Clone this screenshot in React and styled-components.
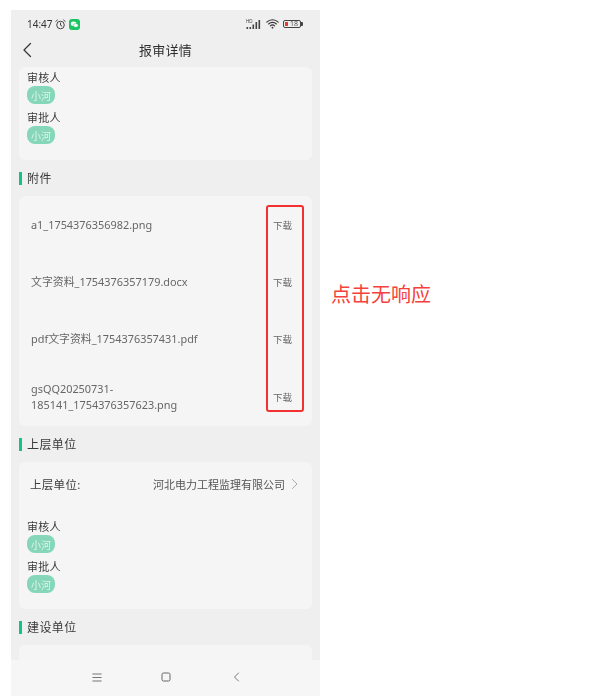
import React from "react";
import styled, { createGlobalStyle } from "styled-components";

const GlobalStyle = createGlobalStyle`
  html, body {
    margin: 0;
    padding: 0;
    background: #ffffff;
  }
  body {
    font-family: "Noto Sans", "Noto Sans CJK SC", sans-serif;
  }
`;

const Page = styled.div`
  display: flex;
  align-items: flex-start;
  width: 595px;
  height: 696px;
  overflow: hidden;
  padding: 10px 0 0 11px;
  box-sizing: border-box;
`;

const Phone = styled.div`
  position: relative;
  display: flex;
  flex-direction: column;
  width: 309px;
  height: 686px;
  flex: none;
  background: #efefef;
  overflow: hidden;
`;

const Screen = styled.div`
  display: flex;
  flex-direction: column;
  flex: 1;
  min-height: 0;
  filter: blur(0.35px);
`;

const StatusBar = styled.div`
  display: flex;
  align-items: center;
  justify-content: space-between;
  height: 28px;
  padding: 0 19px 0 16px;
  flex: none;
`;

const StatusGroup = styled.div`
  display: flex;
  align-items: center;
  gap: ${(p) => p.$gap || 3}px;
`;

const Clock = styled.span`
  font-size: 10px;
  color: #333333;
  margin-right: -1px;
`;

const Battery = styled.div`
  position: relative;
  display: flex;
  align-items: center;
  justify-content: flex-end;
  width: 18px;
  height: 8px;
  box-sizing: border-box;
  border: 1px solid #444444;
  border-radius: 2px;
  padding-right: 2px;
  font-size: 7px;
  line-height: 6px;
  color: #555555;
  &::before {
    content: "";
    position: absolute;
    left: 1px;
    top: 1px;
    width: 3px;
    height: 4px;
    background: #e53935;
  }
  &::after {
    content: "";
    position: absolute;
    right: -3px;
    top: 1px;
    width: 2px;
    height: 4px;
    background: #444444;
    border-radius: 0 1px 1px 0;
  }
`;

const NavBar = styled.div`
  position: relative;
  display: flex;
  align-items: center;
  justify-content: center;
  height: 29px;
  box-sizing: border-box;
  padding-bottom: 6px;
  flex: none;
  font-size: 13px;
  color: #2f2f2f;
  letter-spacing: 0.3px;
`;

const BackButton = styled.div`
  position: absolute;
  left: 10px;
  top: 3px;
  display: flex;
`;

const Content = styled.div`
  display: flex;
  flex-direction: column;
  flex: 1;
  min-height: 0;
  overflow: hidden;
  padding: 0 8px;
`;

const Card = styled.div`
  background: #f5f5f5;
  border-radius: 6px;
  flex: none;
  box-sizing: border-box;
  height: ${(p) => p.$height}px;
  padding: ${(p) => p.$pad || "0"};
`;

const SectionTitle = styled.div`
  display: flex;
  align-items: center;
  flex: none;
  gap: 5px;
  height: 36px;
  font-size: 12px;
  color: #3a3a3a;
  letter-spacing: 0.4px;
  &::before {
    content: "";
    width: 3px;
    height: 13px;
    background: #0fc584;
  }
`;

const PersonBlock = styled.div`
  display: flex;
  flex-direction: column;
  align-items: flex-start;
  padding-left: 8px;
  margin-bottom: 4px;
`;

const PersonLabel = styled.div`
  font-size: 11px;
  line-height: 20px;
  height: 18px;
  color: #3a3a3a;
  letter-spacing: 0.2px;
`;

const Pill = styled.div`
  display: flex;
  align-items: center;
  justify-content: center;
  width: 28px;
  height: 18px;
  border-radius: 8px;
  background: #86d6ba;
  color: #dff4ec;
  font-size: 10px;
`;

const FileRow = styled.div`
  display: flex;
  align-items: center;
  justify-content: space-between;
  height: 57.3px;
  padding: 0 20px 0 12px;
`;

const FileName = styled.div`
  width: 180px;
  font-size: 10.9px;
  line-height: 16px;
  color: #666666;
  overflow-wrap: anywhere;
`;

const DownloadLink = styled.div`
  font-size: 9.5px;
  color: #666666;
`;

const UnitRow = styled.div`
  display: flex;
  align-items: center;
  justify-content: space-between;
  height: 44px;
  padding: 0 13px 0 11px;
  margin-bottom: 11px;
`;

const UnitLabel = styled.div`
  font-size: 11.5px;
  color: #3a3a3a;
  letter-spacing: 0.3px;
`;

const UnitValue = styled.div`
  display: flex;
  align-items: center;
  gap: 6px;
  font-size: 11px;
  color: #555555;
`;

const BottomBar = styled.div`
  display: grid;
  grid-template-columns: 69px 72px 7px;
  align-items: center;
  height: 36px;
  box-sizing: border-box;
  padding: 0 0 2px 81px;
  flex: none;
  background: #f6f6f6;
`;

const RedBox = styled.div`
  position: absolute;
  left: 255px;
  top: 195px;
  width: 38px;
  height: 207px;
  box-sizing: border-box;
  border: 2px solid #f23030;
  border-radius: 3px;
`;

const Annotation = styled.div`
  margin: 271px 0 0 11px;
  font-size: 20px;
  line-height: 28px;
  color: #f5413c;
  white-space: nowrap;
`;

const Line = ({ d, w = 1, c = "#555" }) => (
  <path d={d} fill="none" stroke={c} strokeWidth={w} strokeLinecap="round" strokeLinejoin="round" />
);

const AlarmIcon = () => (
  <svg width="11" height="11" viewBox="0 0 11 11">
    <circle cx="5.5" cy="6" r="3.8" fill="none" stroke="#444" strokeWidth="1" />
    <Line d="M5.5 4v2.2l1.3.8M.8 2.4 2.4 1M10.2 2.4 8.6 1" c="#444" />
  </svg>
);

const WechatIcon = () => (
  <svg width="11" height="11" viewBox="0 0 11 11">
    <rect width="11" height="11" rx="3" fill="#19c463" />
    <ellipse cx="4.6" cy="4.8" rx="2.8" ry="2.2" fill="#fff" />
    <ellipse cx="6.8" cy="6.4" rx="2.4" ry="1.9" fill="#fff" stroke="#19c463" strokeWidth="0.5" />
  </svg>
);

const SignalIcon = () => (
  <svg width="16" height="11" viewBox="0 0 16 11">
    <text x="0" y="4" fontSize="4.5" fill="#444" fontFamily="Liberation Sans">HD</text>
    <g fill="#444">
      <rect x="0.5" y="8" width="1.6" height="2" />
      <rect x="3.5" y="8" width="1.6" height="2" />
      <rect x="6.5" y="5.5" width="1.6" height="4.5" />
      <rect x="9.5" y="3" width="1.6" height="7" />
      <rect x="12.5" y="1" width="1.6" height="9" />
    </g>
  </svg>
);

const WifiIcon = () => (
  <svg width="13" height="10" viewBox="0 0 13 10">
    <Line d="M.8 3.2a8 8 0 0 1 11.4 0M2.6 5a5.5 5.5 0 0 1 7.8 0M4.4 6.9a3 3 0 0 1 4.2 0" c="#333" w="1.1" />
    <circle cx="6.5" cy="8.7" r="0.9" fill="#333" />
  </svg>
);

const BackIcon = () => (
  <svg width="12" height="18" viewBox="0 0 12 18">
    <Line d="M9.5 2.5 3 9l6.5 6.5" c="#333" w="1.2" />
  </svg>
);

const ChevronIcon = () => (
  <svg width="8" height="12" viewBox="0 0 8 12">
    <Line d="M1.5 1.5 6 6l-4.5 4.5" c="#aaa" w="1" />
  </svg>
);

const MenuIcon = () => (
  <svg width="10" height="9" viewBox="0 0 10 9">
    <Line d="M.8 1h8.4M.8 4.5h8.4M.8 8h8.4" c="#777" w="1" />
  </svg>
);

const HomeIcon = () => (
  <svg width="10" height="10" viewBox="0 0 10 10">
    <rect x="1" y="1" width="8" height="8" rx="1.5" fill="none" stroke="#666" strokeWidth="1" />
  </svg>
);

const NavBackIcon = () => (
  <svg width="7" height="10" viewBox="0 0 7 10">
    <Line d="M5.5 1 1.5 5l4 4" c="#777" w="1" />
  </svg>
);

const Person = ({ label }) => (
  <PersonBlock>
    <PersonLabel>{label}</PersonLabel>
    <Pill>小河</Pill>
  </PersonBlock>
);

const files = [
  "a1_1754376356982.png",
  "文字资料_1754376357179.docx",
  "pdf文字资料_1754376357431.pdf",
  "gsQQ20250731-185141_1754376357623.png",
];

export default function App() {
  return (
    <Page>
      <GlobalStyle />
      <Phone>
        <Screen>
          <StatusBar>
            <StatusGroup>
              <Clock>14:47</Clock>
              <AlarmIcon />
              <WechatIcon />
            </StatusGroup>
            <StatusGroup $gap={4}>
              <SignalIcon />
              <WifiIcon />
              <Battery>18</Battery>
            </StatusGroup>
          </StatusBar>
          <NavBar>
            <BackButton>
              <BackIcon />
            </BackButton>
            报审详情
          </NavBar>
          <Content>
            <Card $height={93} $pad="1px 0 0">
              <Person label="审核人" />
              <Person label="审批人" />
            </Card>
            <SectionTitle>附件</SectionTitle>
            <Card $height={230}>
              {files.map((name) => (
                <FileRow key={name}>
                  <FileName>{name}</FileName>
                  <DownloadLink>下载</DownloadLink>
                </FileRow>
              ))}
            </Card>
            <SectionTitle>上层单位</SectionTitle>
            <Card $height={147}>
              <UnitRow>
                <UnitLabel>上层单位:</UnitLabel>
                <UnitValue>
                  河北电力工程监理有限公司
                  <ChevronIcon />
                </UnitValue>
              </UnitRow>
              <Person label="审核人" />
              <Person label="审批人" />
            </Card>
            <SectionTitle>建设单位</SectionTitle>
            <Card $height={60} />
          </Content>
          <BottomBar>
            <MenuIcon />
            <HomeIcon />
            <NavBackIcon />
          </BottomBar>
        </Screen>
        <RedBox />
      </Phone>
      <Annotation>点击无响应</Annotation>
    </Page>
  );
}
